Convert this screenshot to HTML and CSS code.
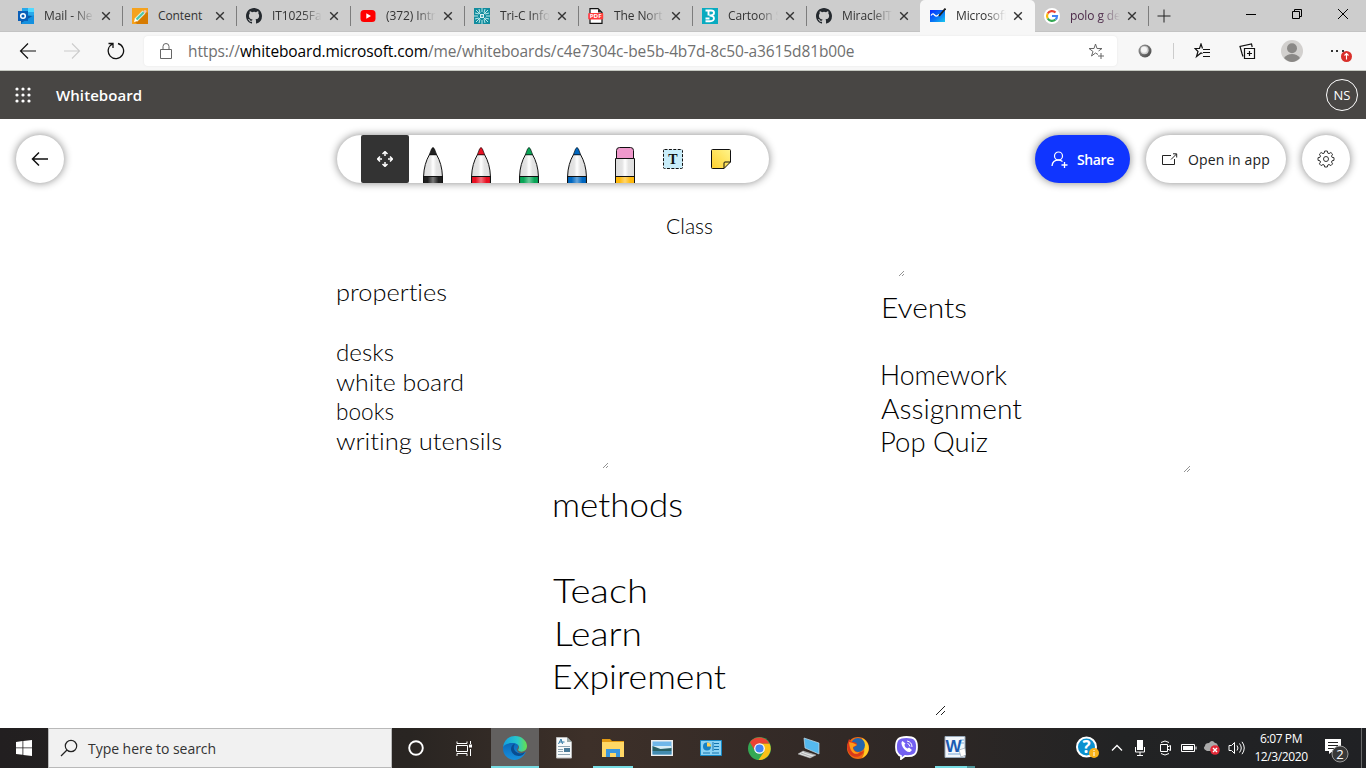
FILE: index.html
```
<!DOCTYPE html>
<html lang="en"><head><meta charset="utf-8"><title>Microsoft Whiteboard</title><link rel="stylesheet" href="styles.css"></head>
<body>
<svg class="defs" aria-hidden="true"><defs>
<symbol id="x" viewBox="0 0 10 10"><path d="M1.2 1.2 8.8 8.8M8.8 1.2 1.2 8.8" fill="none" stroke="#333" stroke-width="1.4"/></symbol>
<symbol id="github" viewBox="0 0 16 16"><path fill="#24292e" d="M8 0C3.58 0 0 3.58 0 8c0 3.54 2.29 6.53 5.47 7.59.4.07.55-.17.55-.38v-1.49c-2.01.37-2.53-.49-2.69-.94-.09-.23-.48-.94-.82-1.13-.28-.15-.68-.52-.01-.53.63-.01 1.08.58 1.23.82.72 1.21 1.87.87 2.33.66.07-.52.28-.87.51-1.07-1.78-.2-3.64-.89-3.64-3.95 0-.87.31-1.59.82-2.15-.08-.2-.36-1.02.08-2.12 0 0 .67-.21 2.2.82a7.6 7.6 0 0 1 4 0c1.53-1.04 2.2-.82 2.2-.82.44 1.1.16 1.92.08 2.12.51.56.82 1.27.82 2.15 0 3.07-1.87 3.75-3.65 3.95.29.25.54.73.54 1.48v2.2c0 .21.15.46.55.38A8 8 0 0 0 16 8c0-4.42-3.58-8-8-8z"/></symbol>
<linearGradient id="barrel"><stop offset="0" stop-color="#dcdcdc"/><stop offset=".35" stop-color="#e4e4e4"/><stop offset=".5" stop-color="#fff"/><stop offset=".68" stop-color="#e4e4e4"/><stop offset="1" stop-color="#ddd"/></linearGradient>
<linearGradient id="shine"><stop offset=".2" stop-color="#fff" stop-opacity="0"/><stop offset=".5" stop-color="#fff" stop-opacity=".4"/><stop offset=".8" stop-color="#fff" stop-opacity="0"/></linearGradient>
<symbol id="pen" viewBox="0 0 20 36"><path d="M.6 36V29C.8 21 3 13.500 6.500 7.500H13.500C17 13.500 19.200 21 19.400 29V36" fill="url(#barrel)" stroke="#111"/><path d="M6.300 7.800 8.600 1.800Q10-.8 11.400 1.800L13.700 7.800Z" fill="currentColor" stroke="#111" stroke-width=".7"/><path d="M1 29.500h18V37H1z" fill="currentColor"/><path d="M1 29.500h18V37H1z" fill="url(#shine)"/><path d="M.6 29.500h18.800M.6 29v8M19.400 29v8" stroke="#111"/></symbol>
</defs></svg>
<header class="tabs">
<div class="tab"><svg class="fav" viewBox="0 0 16 16"><path fill="#28a8ea" d="M4 0h12v8H4z"/><path fill="#50d9ff" d="M10 0h6v4h-6z"/><path fill="#0364b8" d="M4 3h6v5H4z"/><path fill="#0b59a5" d="m3 7 13 1v8H3z"/><path fill="#1490df" d="m3 15 13-8v9H4z"/><path fill="#0a5fb8" d="M0 3h10v10H0z"/><circle cx="5" cy="8" r="2.300" fill="none" stroke="#fff" stroke-width="1.500"/></svg><span class="title">Mail - Ne</span><svg class="close"><use href="#x"/></svg></div>
<div class="tab"><svg class="fav" viewBox="0 0 16 16"><path fill="#f5a21d" d="M0 0h16v16H0z"/><path fill="#d77b00" d="m3 14 11-11 2 2v11H5z"/><path stroke="#d9f2df" stroke-width="4" d="m4 12 8-8"/><path stroke="#49c6ad" stroke-width="2" d="m4 12 8-8"/><path fill="#fff" d="m2 14 1-4 3 3z"/><circle cx="13" cy="3.500" r="1.600" fill="#f7c2ac"/></svg><span class="title">Content</span><svg class="close"><use href="#x"/></svg></div>
<div class="tab"><svg class="fav"><use href="#github"/></svg><span class="title">IT1025Fa</span><svg class="close"><use href="#x"/></svg></div>
<div class="tab"><svg class="fav" viewBox="0 0 16 16"><rect x=".5" y="2" width="15" height="12" rx="3.500" fill="red"/><path fill="#fff" d="M6.300 5.300v5.400L11 8z"/></svg><span class="title">(372) Intr</span><svg class="close"><use href="#x"/></svg></div>
<div class="tab"><svg class="fav" viewBox="0 0 16 16"><path fill="#128c9e" d="M0 0h16v16H0z"/><path d="m2 2 12 12M14 2 2 14M8 0v4M8 12v4M0 8h4M12 8h4M1 5l4 1M5 1l1 4M11 1l-1 4M15 5l-4 1M1 11l4-1M5 15l1-4M11 15l-1-4M15 11l-4-1" stroke="#b9e8e9" stroke-width="1"/><circle cx="8" cy="8" r="2" fill="#fff"/><circle cx="8" cy="8" r="1" fill="#128c9e"/></svg><span class="title">Tri-C Info</span><svg class="close"><use href="#x"/></svg></div>
<div class="tab"><svg class="fav" viewBox="0 0 16 16"><path d="M2 .6h8L14 4.500V15.400H2z" fill="#fff" stroke="#111" stroke-width="1.200"/><path d="M10 .6v4h4" fill="#222"/><rect x=".2" y="5" width="15" height="6.500" rx="1" fill="#ff3b3b"/><text x="1.700" y="10.200" class="pdf" textLength="12" lengthAdjust="spacingAndGlyphs">PDF</text></svg><span class="title">The Nort</span><svg class="close"><use href="#x"/></svg></div>
<div class="tab"><svg class="fav" viewBox="0 0 16 16"><path fill="#08abc0" d="M0 0h16v16H0z"/><path d="M3.500 2.500H9c4 0 4 4.500 0 5H7.500M6.500 2.500v5M8 7.500c5 0 5.500 5.800 0 5.800H3.500M3.500 10.500h4" fill="none" stroke="#fff" stroke-width="1.900"/></svg><span class="title">Cartoon S</span><svg class="close"><use href="#x"/></svg></div>
<div class="tab"><svg class="fav"><use href="#github"/></svg><span class="title">MiracleIT</span><svg class="close"><use href="#x"/></svg></div>
<div class="tab active"><svg class="fav" viewBox="0 0 16 16"><defs><linearGradient id="wb" x2="1" y2="1"><stop stop-color="#052bff"/><stop offset=".55" stop-color="#0875f5"/><stop offset="1" stop-color="#19c9ee"/></linearGradient></defs><path fill="url(#wb)" d="M0 2h15v12H0z"/><path d="M1 7.500c2-3 3-1 4 0s2 1 4-1" fill="none" stroke="#fff" stroke-width="1.300"/><path d="m9 8 6.500-7.500" stroke="#222" stroke-width="1.800"/></svg><span class="title">Microsoft</span><svg class="close"><use href="#x"/></svg></div>
<div class="tab"><svg class="fav" viewBox="0 0 16 16"><circle cx="8" cy="8" r="8" fill="#fff"/><g fill="none" stroke-width="2.200"><path stroke="#ea4335" d="M3.700 5.500A5 5 0 0 1 11.500 4.500"/><path stroke="#fbbc05" d="M3.700 5.500a5 5 0 0 0 0 5"/><path stroke="#34a853" d="M3.700 10.500a5 5 0 0 0 7.800 1"/><path stroke="#4285f4" d="M8 8h5c0 1.800-.6 2.800-1.500 3.500"/></g></svg><span class="title polo">polo g de</span><svg class="close"><use href="#x"/></svg></div>
<svg class="plus" viewBox="0 0 14 14"><path d="M7 .5v13M.5 7h13" stroke="#222"/></svg>
<div class="win"><svg viewBox="0 0 12 12"><path d="M1 6.500h10" stroke="#000"/></svg><svg viewBox="0 0 12 12"><path d="M1.500 3.500h7v7h-7zM3.500 3V1.500h7v7H9" fill="none" stroke="#000"/></svg><svg viewBox="0 0 12 12"><path d="m1 1 10 10M11 1 1 11" stroke="#000"/></svg></div>
</header>
<nav class="tools">
<svg class="nav" viewBox="0 0 18 18"><path d="M17 9H2M9 1.500 1.500 9 9 16.500" fill="none" stroke="#111" stroke-width="1.200"/></svg>
<svg class="nav" viewBox="0 0 18 18"><path d="M1 9h15M9 1.500 16.500 9 9 16.500" fill="none" stroke="#ccc" stroke-width="1.100"/></svg>
<svg class="nav" viewBox="0 0 18 18"><path d="M11 1.500A7.700 7.700 0 1 1 5.500 2M1.500 1.500H6V6" fill="none" stroke="#111" stroke-width="1.300"/></svg>
<div class="address"><svg class="lock" viewBox="0 0 14 18"><path d="M1.500 7.500h11v9h-11zM4 7.500V4.500a3 3 0 0 1 6 0v3" fill="none" stroke="#666"/></svg><span class="url">https://<b>whiteboard.microsoft.com</b>/me/whiteboards/c4e7304c-be5b-4b7d-8c50-a3615d81b00e</span><svg class="star" viewBox="0 0 17 17"><path d="M10 11.500 7.500 10 3.500 13 5 8.500 1 5.500h5L7.500 1 9 5.500h5L10.500 8M13 10v6M10 13h6" fill="none" stroke="#666"/></svg></div>
<svg class="ball" viewBox="0 0 16 16"><defs><linearGradient id="ring" x2="1" y2="1"><stop stop-color="#999"/><stop offset="1" stop-color="#444"/></linearGradient></defs><circle cx="8" cy="8" r="6.500" fill="url(#ring)"/><circle cx="7.500" cy="7.200" r="4.100" fill="#d0d0d0"/><circle cx="7" cy="6.800" r="3" fill="#f5f5f5"/></svg>
<i class="rule"></i>
<svg class="fstar" viewBox="0 0 17 17"><path d="M8.500 10.500 7 10l-4.500 3.500L4 8.500 1 5.500h4.500L7 1l1.500 4.500M9 6.500h7M9 9.500h7M9 13.500h7" fill="none" stroke="#111" stroke-width="1.200"/></svg>
<svg class="collect" viewBox="0 0 17 17"><path d="M5.500 5.500h10v10h-10zM10.500 8v5M8 10.500h5M4 13.500l-1-3-2-7L12.500 1l.7 3" fill="none" stroke="#111" stroke-width="1.200"/></svg>
<svg class="person" viewBox="0 0 22 22"><circle cx="11" cy="11" r="11" fill="#d2d0ce"/><circle cx="11" cy="8.200" r="5" fill="#8a8886"/><path d="M3 18q3-4 8-4t8 4q-8 8-16 0" fill="#8a8886"/></svg>
<svg class="more" viewBox="0 0 24 16"><path d="M3 4h2v2H3zm5 0h2v2H8zm6 0h2v2h-2z" fill="#333"/><circle cx="18.500" cy="10.500" r="5.500" fill="#d9302b"/><path d="M18.500 13.500v-6M16.500 9.500l2-2 2 2" fill="none" stroke="#fff" stroke-width="1.100"/></svg>
</nav>
<div class="appbar"><svg class="waffle" viewBox="0 0 16 16"><g fill="#fff"><circle cx="2" cy="2" r="1.600"/><circle cx="8" cy="2" r="1.600"/><circle cx="14" cy="2" r="1.600"/><circle cx="2" cy="8" r="1.600"/><circle cx="8" cy="8" r="1.600"/><circle cx="14" cy="8" r="1.600"/><circle cx="2" cy="14" r="1.600"/><circle cx="8" cy="14" r="1.600"/><circle cx="14" cy="14" r="1.600"/></g></svg><span class="brand">Whiteboard</span><span class="avatar">NS</span></div>
<main class="board">
<div class="controls">
<button class="round"><svg width="18" height="16" viewBox="0 0 18 16"><path d="M17 8H2M8 1.500 1.500 8 8 14.500" fill="none" stroke="#111" stroke-width="1.500"/></svg></button>
<div class="palette"><span class="selected"><svg width="16" height="16" viewBox="0 0 16 16"><path d="M5.500 3 8 .6 10.500 3M5.500 13 8 15.400 10.500 13M3 5.500.6 8 3 10.500M13 5.500 15.400 8 13 10.500M8 1v4M8 11v4M1 8h4M11 8h4" fill="none" stroke="#fff" stroke-width="1.500"/></svg></span>
<span class="slot black"><svg><use href="#pen"/></svg></span><span class="slot red"><svg><use href="#pen"/></svg></span><span class="slot green"><svg><use href="#pen"/></svg></span><span class="slot blue"><svg><use href="#pen"/></svg></span>
<span class="slot"><svg viewBox="0 0 20 36"><path d="M.5 11.500h19V36.5H.5z" fill="url(#barrel)" stroke="#111"/><path d="M1.500 11.500v-8q0-3 3-3h11q3 0 3 3v8z" fill="#ef99cc" stroke="#111"/><path d="M1 29.500h18V37H1z" fill="#ffb90c"/><path d="M1 29.500h18V37H1z" fill="url(#shine)"/><path d="M.5 29.500h19M.5 29v8M19.500 29v8" stroke="#111"/></svg></span>
<span class="mid"><svg width="20" height="20" viewBox="0 0 20 20"><rect x=".5" y=".5" width="19" height="19" rx="1" fill="#c8edfa" stroke="#111" stroke-dasharray="3 1.400"/><text x="10" y="14.500" class="tee">T</text></svg></span>
<span class="mid"><svg width="20" height="20" viewBox="0 0 20 20"><defs><linearGradient id="note" x1="1" x2="0" y2="1"><stop stop-color="#fff58b"/><stop offset="1" stop-color="#ffd02e"/></linearGradient></defs><path d="M.5 1.500q0-1 1-1h17q1 0 1 1V13l-6.500 6.500H1.500q-1 0-1-1zM13 19.500V14q0-1 1-1h5.500" fill="url(#note)" stroke="#111"/></svg></span></div>
<button class="share"><svg width="17" height="17" viewBox="0 0 17 17"><circle cx="7.500" cy="5" r="4" fill="none" stroke="#fff" stroke-width="1.200"/><path d="M1 15q.5-6 6.500-6 2 0 4 1.500M13.500 11v6M10.500 14h6" fill="none" stroke="#fff" stroke-width="1.300"/></svg><span>Share</span></button>
<button class="open"><svg width="16" height="13" viewBox="0 0 16 13"><path d="M9 2.500H.5v9h12V6M9 6.500 14.500 1M11 .8h3.700v3.700" fill="none" stroke="#222"/></svg><span>Open in app</span></button>
<button class="round gear"><svg width="18" height="18" viewBox="0 0 18 18"><path d="M7.700 1h2.600l.5 2.100 1.200.5 1.900-1.100 1.700 1.700-1.100 1.900.5 1.200L17 7.700v2.600l-2 .5-.5 1.200 1.100 1.900-1.700 1.700-1.900-1.100-1.200.5-.5 2H7.700l-.5-2-1.200-.5-1.900 1.100-1.700-1.700L3.500 12 3 10.800l-2-.5V7.700l2-.4.5-1.200-1.100-1.900 1.700-1.700L6 3.600l1.200-.5z" fill="none" stroke="#333"/><circle cx="9" cy="9" r="2.500" fill="none" stroke="#333"/></svg></button>
</div>
<svg class="ink" viewBox="0 119 1366 609"><g fill="#000">
<g font-size="21"><text x="666" y="234" textLength="47" lengthAdjust="spacingAndGlyphs">Class</text></g>
<g font-size="23"><text x="336" y="301" textLength="111" lengthAdjust="spacingAndGlyphs">properties</text><text x="336" y="361" textLength="58" lengthAdjust="spacingAndGlyphs">desks</text><text x="336" y="391" textLength="128" lengthAdjust="spacingAndGlyphs">white board</text><text x="336" y="420" textLength="58" lengthAdjust="spacingAndGlyphs">books</text><text x="336" y="450" textLength="166" lengthAdjust="spacingAndGlyphs">writing utensils</text></g>
<g font-size="27"><text x="881" y="318" textLength="86" lengthAdjust="spacingAndGlyphs">Events</text><text x="880" y="385" textLength="127" lengthAdjust="spacingAndGlyphs">Homework</text><text x="881" y="419" textLength="141" lengthAdjust="spacingAndGlyphs">Assignment</text><text x="880" y="452" textLength="108" lengthAdjust="spacingAndGlyphs">Pop Quiz</text></g>
<g font-size="34"><text x="552" y="517" textLength="131" lengthAdjust="spacingAndGlyphs">methods</text><text x="553" y="603" textLength="95" lengthAdjust="spacingAndGlyphs">Teach</text><text x="554" y="646" textLength="88" lengthAdjust="spacingAndGlyphs">Learn</text><text x="552" y="689" textLength="174" lengthAdjust="spacingAndGlyphs">Expirement</text></g></g>
<path d="m899 276 5-5m-2 5 2-2M603 468l5-5m-2 5 2-2M1184 472l6-6m-3 6 3-3" stroke="#777" stroke-width=".8"/><path d="m936 715 9-9m-4 9 4-4" stroke="#222"/></svg>
</main>
<footer class="taskbar">
<span class="start"><svg width="16" height="16" viewBox="0 0 16 16"><path fill="#fff" d="m0 2 6.500-.9v6.400H0zM7.300 1 16 0v7.500H7.300zM0 8.300h6.500v6.500L0 14zM7.300 8.300H16V16l-8.700-1z"/></svg></span>
<div class="search"><svg width="18" height="18" viewBox="0 0 18 18"><circle cx="11" cy="7" r="5.700" fill="none" stroke="#222" stroke-width="1.200"/><path d="m7 11-6 6" stroke="#222" stroke-width="1.300"/></svg><span>Type here to search</span></div>
<span class="cell first"><svg width="16" height="16" viewBox="0 0 16 16"><circle cx="8" cy="8" r="6.800" fill="none" stroke="#fff" stroke-width="1.900"/></svg></span>
<span class="cell view"><svg width="17" height="17" viewBox="0 0 17 17"><path d="M1 1.500v2h10v-2M.5 5.500h11v6H.500zM1 16v-2.500h10V16M14.500 1v3M14.500 9v7" fill="none" stroke="#fff"/><path d="M13 4.500h3v3h-3z" fill="#fff"/></svg></span>
<span class="cell edge"><svg width="24" height="24" viewBox="0 0 24 24"><defs><linearGradient id="e1"><stop stop-color="#139ee0"/><stop offset=".6" stop-color="#28c8cc"/><stop offset="1" stop-color="#67df4a"/></linearGradient><linearGradient id="e2" y2="1" x2="0"><stop stop-color="#0b65b7"/><stop offset="1" stop-color="#1691de"/></linearGradient></defs><path fill="url(#e2)" d="M0 11C2 5 13 4 15 9c1 3-2 4-1 5 1 4 5 4 9 2-4 8-12 10-18 6C1 19 0 16 0 11"/><path fill="url(#e1)" d="M0 11C1 4 6 0 12 0c7 0 12 5 12 10 0 6-7 7-9 4 3-4-1-7-5-7-5 0-8 1-10 4"/><path fill="#094d91" d="M8 13c0-3 2-5 4-5-2 2-2 7 3 9 3 1 5 0 7-1-3 7-14 4-14-3"/></svg></span>
<span class="cell"><svg width="18" height="22" viewBox="0 0 18 22"><path fill="#f7fafb" stroke="#bbb" d="M1.500.5H12L16.500 5v16h-15z"/><path fill="#9aa" d="M12 .5V5h4.500z"/><path stroke="#2f78a5" fill="none" d="M3.500 7 6 2l1.500 5M4.500 5h5"/><path stroke="#8fa5b3" d="M3 9.500h12M3 12.500h5M3 14.500h5M3 17.500h12"/><path fill="#497a98" d="M9 11h6v4H9z"/></svg></span>
<span class="cell explorer"><svg width="22" height="20" viewBox="0 0 22 20"><path fill="#e39a13" d="M0 1h8l2 2h12v5H0z"/><path fill="#ffd765" d="M0 4h22v15H0z"/><path fill="#3a96dd" d="M4 11h14v8h-4v-4H8v4H4z"/></svg></span>
<span class="cell"><svg width="22" height="18" viewBox="0 0 22 18"><path fill="#eee" d="M0 1h22v16H0z"/><path fill="#70b7e9" d="M1.500 2.500h19v13h-19z"/><path fill="#d7edf6" d="M2 7h18v4H2z"/><path fill="#285f63" d="m1.500 7 8 3 11-1v3h-19z"/><path fill="#428bb0" d="M1.500 12h19v3.500h-19z"/></svg></span>
<span class="cell"><svg width="22" height="18" viewBox="0 0 22 18"><path fill="#8cd3f4" stroke="#1689c6" d="M.5 1.500h21v15H.5z"/><circle cx="7" cy="7.500" r="4" fill="#1682c5"/><path fill="#ffd157" d="M7 7.500v-4a4 4 0 0 1 4 4z"/><path stroke="#1475ae" d="M14 4.500h5M14 7.500h5M14 10.500h5M13 3v9M3 14h7M12 14h7"/></svg></span>
<span class="cell"><svg width="23" height="23" viewBox="0 0 24 24"><circle cx="12" cy="12" r="12" fill="#34a853"/><path fill="#ea4335" d="M2 5.500A12 12 0 0 1 22.500 7H12L7 14z"/><path fill="#fbc116" d="M12 7h10.500A12 12 0 0 1 11 24l6-9z"/><circle cx="12" cy="12" r="5.600" fill="#fff"/><circle cx="12" cy="12" r="4.300" fill="#4285f4"/></svg></span>
<span class="cell"><svg width="24" height="22" viewBox="0 0 24 22"><path fill="#55b9ee" stroke="#c6dce8" stroke-width=".7" d="m7 1 15 5v11L8 11z"/><path fill="#e1e4e5" stroke="#aaa" stroke-width=".5" d="m6 14 13 4-6 3-12-4z"/><path stroke="#999" stroke-width=".7" d="m4 16 11 4M7 15l10 3"/></svg></span>
<span class="cell"><svg width="24" height="24" viewBox="0 0 24 24"><circle cx="12" cy="12" r="11" fill="#ef6a12"/><path fill="#ffcd23" d="M16 2c10 5 8 17 0 20 4-6 2-12 0-20"/><circle cx="12" cy="9" r="7" fill="#2466ab"/><path fill="#d83a1b" d="M1 9 3 3l3 3c4 0 5 1 5 3l-4 3c2 5 6 5 11 3-3 9-17 8-17-6"/><path fill="#ff9b18" d="m3 6 4 1 4 2-4 2c0 4 3 6 7 5-4 4-10 2-11-10"/></svg></span>
<span class="cell"><svg width="23" height="24" viewBox="0 0 23 24"><path fill="#7360f2" stroke="#fff" stroke-width="1.800" d="M11.500 1C3 1 1 4 1 11c0 6 2 8 5 9v3l4-3c9 1 12-2 12-9 0-8-3-10-10.500-10z"/><path fill="#fff" d="M7.500 5C4 7 10 17 15 16l2-2-3-2.500-1.500 1c-2-1-3-2-3-4l1-1z"/><path d="M12 5q5 1 5 6M12.500 7.500q2 .5 2.500 3" fill="none" stroke="#fff"/></svg></span>
<span class="cell word"><svg width="22" height="22" viewBox="0 0 22 22"><path fill="#f2f7fc" stroke="#9ab" d="M1 .5h20v21H1z"/><path stroke="#7ba7d6" d="M16 4h4M17 7h3M4 18h14"/><text x="9.500" y="16" class="wordw">W</text><path fill="#fff" stroke="#789" stroke-width=".5" d="m15 14 6-2 1 7-5 2z"/></svg></span>
<div class="tray">
<svg class="help" width="24" height="24" viewBox="0 0 24 24"><circle cx="10.500" cy="11" r="9.500" fill="#0a91cf" stroke="#fff" stroke-width="2"/><text x="10.500" y="17" class="question">?</text><circle cx="18" cy="17" r="5" fill="#f9b219"/><path d="M18 14v1m0 1v4" stroke="#fff"/></svg>
<svg class="chev" width="12" height="8" viewBox="0 0 12 8"><path d="m1 6.500 5-5 5 5" fill="none" stroke="#fff" stroke-width="1.300"/></svg>
<svg class="mic" width="12" height="18" viewBox="0 0 12 18"><rect x="3" y="1" width="6" height="10" fill="#fff"/><path d="M1.500 8v5h9V8M6 13v3M3 16.500h6" fill="none" stroke="#fff"/></svg>
<svg class="meet" width="14" height="18" viewBox="0 0 14 18"><path d="M2.500 5.500h7v7h-7zM9.500 8l3-1.500v5l-3-1.500M3 3.500q4-3 8 0M3 14.500q4 3 8 0" fill="none" stroke="#fff"/></svg>
<svg class="battery" width="16" height="10" viewBox="0 0 16 10"><path d="M.5 1.500h13v7H.5zM15 3.500v3" fill="none" stroke="#fff"/><path fill="#fff" d="M2 3h10v4H2z"/></svg>
<svg class="cloud" width="18" height="16" viewBox="0 0 18 16"><path d="M4 11q-5-2-2-5Q2 3 6 3q3-4 6 0 3 0 3 5v3z" fill="#aaa"/><circle cx="12" cy="10" r="4.800" fill="#e32938"/><path d="m10 8 4 4m0-4-4 4" stroke="#fff" stroke-width="1.400"/></svg>
<svg class="sound" width="17" height="14" viewBox="0 0 17 14"><path d="M1 4.500h2.500l3-3v11l-3-3H1zM9 4.500q2 2.500 0 5M11.500 2.500q3.500 4.500 0 9M14 .8q4.500 6.200 0 12.400" fill="none" stroke="#fff"/></svg>
<div class="clock"><span>6:07 PM</span><span>12/3/2020</span></div>
<svg class="notice" width="26" height="26" viewBox="0 0 26 26"><path fill="#fff" d="M1 2h16v12H9l-4 3v-3H1z"/><path d="M4 5.500h10M4 8.500h10M4 11.500h6" stroke="#222"/><circle cx="16" cy="17" r="8" fill="#383838" stroke="#999"/><text x="16" y="21.500" class="count">2</text></svg>
<i class="edge-line"></i></div>
</footer>
</body></html>
```
FILE: styles.css
```
*{box-sizing:border-box}
body{margin:0;width:1366px;height:768px;overflow:hidden;display:flex;flex-direction:column;background:#fff;font-family:"Open Sans","Noto Sans",sans-serif;color:#111}
svg{flex:none;display:block}
.defs{position:absolute;width:0;height:0}
.tabs{height:32px;background:#cdcdcd;display:flex;flex:none;padding-left:9px;box-shadow:inset 0 -1px #c3c3c3}
.tab{width:114px;height:32px;flex:none;display:flex;align-items:center;padding-left:9px;background:linear-gradient(#7d7d7d,#7d7d7d) right 6px/1px 20px no-repeat}
.tab:nth-child(8){background:none}
.tab.active{background:#f7f7f7;border-radius:5px 5px 0 0;margin-left:-1px;padding-left:10px;width:115px}
.fav{width:16px;height:16px}
.title{margin-left:10px;width:50px;white-space:nowrap;font-size:12px;letter-spacing:-.1px;line-height:18px;color:#333;-webkit-mask-image:linear-gradient(90deg,#000 60%,transparent)}
.polo{color:#4c2948}
.tab:nth-child(2) .title{-webkit-mask-image:none}
.close{width:10px;height:10px;margin-left:7px}
.plus{width:14px;height:14px;margin:9px 0 0 8px}
.win{margin-left:auto;margin-right:17px;display:flex;gap:34px;padding-top:8px}
.win svg{width:12px;height:12px}
.tools{height:39px;flex:none;background:#f7f7f7;display:flex;align-items:center;padding-left:19px;border-bottom:1px solid #c5c8c1}
.nav{width:18px;height:18px;margin-right:26px}
.address{background:#fff;height:30px;width:973px;margin-left:-7px;border-radius:4px;display:flex;align-items:center;padding:0 12px 0 15px;box-shadow:0 0 2px #e3e3e3}
.lock{width:14px;height:18px}
.url{margin-left:15px;font-size:15.500px;letter-spacing:-.12px;color:#707070;white-space:nowrap}
.url b{color:#000;font-weight:400}
.star{width:17px;height:17px;margin-left:auto}
.ball{width:16px;height:16px;margin-left:20px}
.rule{width:1px;height:16px;background:#ccc;margin-left:20px}
.fstar{width:17px;height:17px;margin-left:20px}
.collect{width:17px;height:17px;margin-left:28px}
.person{width:22px;height:22px;margin-left:25px}
.more{width:24px;height:16px;margin-left:25px;margin-top:6px}
.appbar{height:48px;flex:none;background:#484644;color:#fff;display:flex;align-items:center;padding:0 8px 0 15px}
.waffle{width:16px;height:16px}
.brand{font-size:15px;font-weight:600;margin-left:25px;letter-spacing:.08px}
.avatar{margin-left:auto;width:32px;height:32px;border:1px solid #fff;border-radius:50%;display:grid;place-items:center;font-size:13px}
.board{height:609px;flex:none;position:relative;overflow:hidden;background:#fff}
.controls{display:flex;height:80px;padding:16px;align-items:center}
button{border:0;padding:0;background:#fff;font:14px "Open Sans",sans-serif;color:#222;height:48px;border-radius:24px;display:flex;align-items:center;box-shadow:0 0 8px rgba(0,0,0,.48)}
.round{width:48px;justify-content:center}
.palette{height:48px;width:432px;margin-left:273px;padding-left:24px;border-radius:24px;display:flex;box-shadow:0 0 8px rgba(0,0,0,.48);overflow:hidden}
.selected{width:48px;height:48px;background:#333;border-radius:2px;display:grid;place-items:center}
.slot{width:48px;height:48px;padding:12px 14px 0}
.slot svg{width:20px;height:36px}
.mid{width:48px;height:48px;display:grid;place-items:center}
.black{color:#202020}.red{color:#e81123}.green{color:#0aa557}.blue{color:#0067c0}
.share{width:95px;margin-left:266px;background:#1035ff;color:#fff;padding-left:16px;gap:9px;font-weight:600;letter-spacing:-.4px}
.open{width:140px;margin-left:16px;padding-left:16px;gap:10px;letter-spacing:.15px}
.gear{margin-left:16px}
.ink{position:absolute;left:0;top:0;width:1366px;height:609px;pointer-events:none;font-family:"Ink Free","Segoe Print",Lato,sans-serif;font-weight:300;font-variant-ligatures:none}
.pdf{font:bold 5px "Open Sans",sans-serif;fill:#fff}
.tee{font:bold 14px "Liberation Serif",serif;text-anchor:middle;fill:#111}
.wordw{font:bold 17px "Liberation Sans",sans-serif;text-anchor:middle;fill:#1c5bb2}
.question{font:bold 17px "Open Sans",sans-serif;text-anchor:middle;fill:#fff}
.count{font:13px "Open Sans",sans-serif;text-anchor:middle;fill:#fff}
.taskbar{height:40px;flex:none;display:flex;background:linear-gradient(90deg,#221f20 0,#292522 30%,#3d3029 43%,#352b27 55%,#2d2725 69%,#222324 82%,#202124);color:#fff}
.start{width:48px;display:grid;place-items:center}
.search{width:344px;background:#f1f1f1;border:1px solid #b9b9b9;display:flex;align-items:center;padding-left:11px;gap:10px;color:#333;font-size:14px;letter-spacing:-.04px}
.cell{width:49px;display:grid;place-items:center;flex:none}
.first{width:48px}.view{width:51px;padding-right:3px}
.edge{width:48px;background:#62605f;box-shadow:inset 0 -2px #76dce3}
.explorer{background:linear-gradient(#76dce3,#76dce3) 5px 38px/40px 2px no-repeat}
.word{padding-right:2px;padding-bottom:2px;background:linear-gradient(#76dce3,#76dce3) 4px 38px/32px 2px no-repeat,linear-gradient(#4e9397,#4e9397) 36px 38px/8px 2px no-repeat}
.tray{margin-left:auto;display:flex;align-items:center;padding-right:4px}
.chev{margin-left:11px}.mic{margin-left:11px}.meet{margin-left:12px}.battery{margin-left:9px}.cloud{margin-left:6px}.sound{margin-left:7px}
.clock{width:72px;display:flex;flex-direction:column;text-align:center;font-size:12px;line-height:18px;letter-spacing:-.4px}
.notice{margin-left:7px;margin-top:4px}
.edge-line{width:1px;height:40px;background:#68696a;margin-left:11px}
```
